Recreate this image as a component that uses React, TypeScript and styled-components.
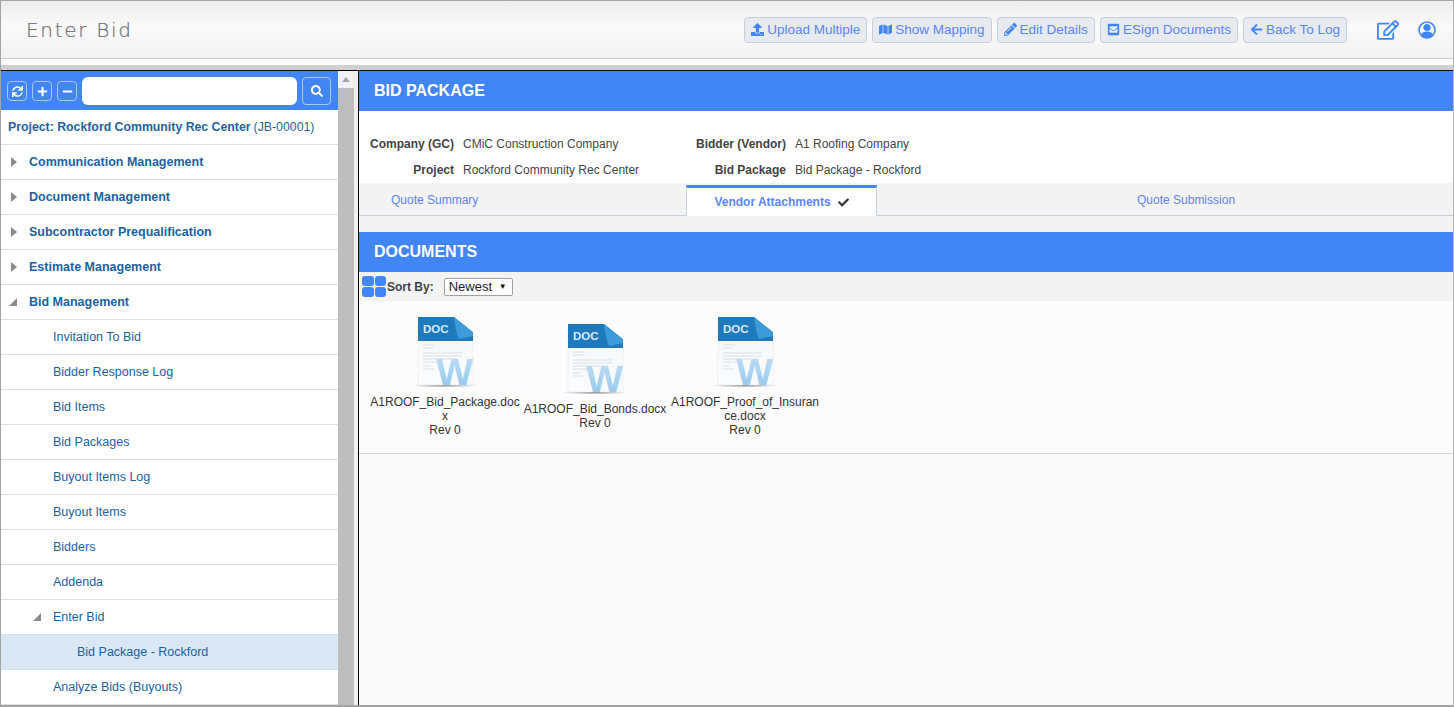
import React from "react";
import styled, { createGlobalStyle } from "styled-components";
import { FaUpload, FaMap, FaPencilAlt, FaEnvelopeSquare, FaArrowLeft, FaSync, FaPlus, FaMinus, FaSearch, FaCheck, FaRegEdit } from "react-icons/fa";

const Global = createGlobalStyle`
  html, body { margin: 0; padding: 0; height: 707px; overflow: hidden; background: #fff; }
  * { box-sizing: border-box; }
  body { font-family: "Liberation Sans", Arial, sans-serif; }
`;

const Page = styled.div`
  width: 1454px; height: 707px; display: flex; flex-direction: column; overflow: hidden;
  border: 1px solid #a3a3a3; border-bottom-width: 2px; border-right-color: #b5b5b5;
`;
const Header = styled.header`
  height: 58px; flex: none; display: flex; align-items: center; padding: 0 17px 0 25px;
  background: linear-gradient(#ececec 0%, #fafafa 45%, #f2f2f2 100%);
  border-bottom: 1px solid #cfcfcf;
`;
const Title = styled.h1`
  margin: 0; flex: 1; font: 200 20px/1 "DejaVu Sans", sans-serif; color: #6a6f78; letter-spacing: 1.7px;
  -webkit-text-stroke: 0.2px #6a6f78;
`;
const Actions = styled.div`display: flex; gap: 5px; margin-right: 30px;`;
const ActionButton = styled.button`
  height: 26px; padding: 0 6px; display: flex; align-items: center; gap: 3px; white-space: nowrap;
  background: #e7eaee; border: 1px solid #c6ced9; border-radius: 4px;
  font: 13.5px "Liberation Sans", sans-serif; color: #5b86f3;
  svg { color: #4285f4; font-size: 13px; }
`;
const HeaderIcons = styled.div`display: flex; align-items: center; gap: 19px; color: #3f86f2;`;
const Gap = styled.div`
  height: 12px; flex: none; background: linear-gradient(#fbfbfb 0 6px, #cfcfcf 6px 11px, #000 11px);
`;
const Body = styled.div`flex: 1; min-height: 0; display: flex;`;
const Side = styled.aside`width: 337px; flex: none; overflow: hidden; background: #fff;`;
const SideBar = styled.div`
  height: 39px; background: #4285f4; display: flex; align-items: center; padding: 0 7px 0 6px; gap: 5px;
`;
const SquareButton = styled.button`
  width: 20px; height: 20px; padding: 0; display: flex; align-items: center; justify-content: center;
  background: #4285f4; color: #fff; border: 1px solid #a9c6f8; border-radius: 4px; font-size: 11px; margin-top: 1px;
`;
const SearchInput = styled.input`
  flex: 1; min-width: 0; height: 28px; border: 0; border-radius: 6px; background: #fff; margin-left: 0;
`;
const SearchButton = styled.button`
  width: 29px; height: 28px; padding: 0; margin-left: 0; display: flex; align-items: center; justify-content: center;
  background: #4285f4; color: #fff; border: 1px solid #a9c6f8; border-radius: 4px; font-size: 12px;
`;
const ProjectRow = styled.div`
  height: 35px; display: flex; align-items: center; padding-left: 7px; white-space: nowrap;
  font-size: 12.3px; font-weight: 700; color: #23639f; border-bottom: 1px solid #d9dfe5;
  span { font-weight: 400; margin-left: 3px; }
`;
const Row = styled.div<{ $indent: number; $bold?: boolean; $active?: boolean }>`
  height: 35px; display: flex; align-items: center; padding-left: ${p => p.$indent}px; position: relative;
  font-size: 12.5px; font-weight: ${p => (p.$bold ? 700 : 400)}; color: #1a62a5;
  background: ${p => (p.$active ? "#dae7f5" : "#fff")}; border-bottom: 1px solid #d6e1ea;
  white-space: nowrap;
`;
const Arrow = styled.span<{ $left: number; $open?: boolean }>`
  position: absolute; left: ${p => p.$left}px; top: 50%; width: 0; height: 0; transform: translateY(-50%);
  ${p => p.$open
    ? `border-left: 8px solid transparent; border-bottom: 8px solid #8b8b8b;`
    : `border-left: 6px solid #8b8b8b; border-top: 5.5px solid transparent; border-bottom: 5.5px solid transparent;`}
`;
const Scroll = styled.div`
  width: 16px; flex: none; background: #bdbdbd; position: relative;
  display: flex; flex-direction: column;
`;
const ScrollTop = styled.div`
  height: 17px; background: #f1f1f1; display: flex; justify-content: center; padding-top: 6px;
  &::before { content: ""; width: 0; height: 0; border-left: 4px solid transparent; border-right: 4px solid transparent; border-bottom: 5px solid #a3a3a3; }
`;
const Divider = styled.div`
  width: 5px; flex: none; background: #f0f0f0; border-right: 1px solid #000;
`;
const Main = styled.main`flex: 1; min-width: 0; display: flex; flex-direction: column; background: #fafafa;`;
const Band = styled.div`
  height: 40px; flex: none; background: #4285f4; color: #fff; font-size: 16px; font-weight: 700;
  display: flex; align-items: center; padding-left: 15px;
`;
const Info = styled.div`
  height: 72px; flex: none; background: #fff; padding-top: 20px;
  display: grid; grid-template-columns: 95px 209px 123px 1fr; grid-auto-rows: 26px; align-items: center;
  font-size: 12px; color: #444;
`;
const Label = styled.div`font-weight: 700; text-align: right; color: #444; padding-right: 0; white-space: nowrap;`;
const Value = styled.div`padding-left: 9px; white-space: nowrap;`;
const Tabs = styled.div`
  height: 33px; flex: none; display: flex; background: #f3f3f3; border-bottom: 1px solid #c6d0de; font-size: 12px; color: #5b86f3;
`;
const Tab = styled.div<{ $pad: number; $w?: number }>`
  ${p => (p.$w ? `width: ${p.$w}px;` : "flex: 1;")} padding-left: ${p => p.$pad}px; display: flex; align-items: center; padding-top: 2px;
`;
const ActiveTab = styled.div`
  width: 191px; margin-top: 2px; margin-bottom: -1px; background: #fff; border: 1px solid #c6d0de; border-top: 3px solid #4285f4; border-bottom: 0;
  display: flex; align-items: center; justify-content: center; gap: 7px; font-weight: 700;
  svg { color: #333; font-size: 11px; }
`;
const Spacer = styled.div`height: 16px; flex: none; background: #f3f3f3;`;
const SortBar = styled.div`
  height: 29px; flex: none; background: #f3f3f3; display: flex; align-items: center; padding-left: 3px;
  font-size: 12px; font-weight: 700; color: #444;
`;
const GridIcon = styled.div`
  width: 24px; height: 21px; margin-right: 1px; display: grid; grid-template: 1fr 1fr / 1fr 1fr; gap: 1px;
  i { background: #4285f4; border-radius: 3px; }
`;
const SortSelect = styled.div`
  width: 69px; height: 18px; margin-left: 10px; background: #fff; border: 1px solid #a0a0a0; border-radius: 2px;
  display: flex; align-items: center; justify-content: space-between; padding: 0 5px 0 4px;
  font-size: 13px; font-weight: 400; color: #222;
  &::after { content: "▼"; font-size: 8px; color: #111; }
`;
const Files = styled.div`
  height: 153px; flex: none; padding: 0 0 0 11px; display: flex; align-items: center;
  border-bottom: 1px solid #d4d4d4; background: #fcfcfc;
`;
const FileCard = styled.div`
  width: 150px; display: flex; flex-direction: column; align-items: center; text-align: center;
  font-size: 12px; line-height: 14px; color: #333;
`;
const FileName = styled.div`width: 150px; word-break: break-all; margin-top: 6px;`;

function DocIcon({ id }: { id: string }) {
  return (
    <svg width="66" height="72" viewBox="0 0 66 72">
      <defs>
        <linearGradient id={`p${id}`} x1="0" y1="0" x2="0" y2="1"><stop offset="0" stopColor="#f4f6f8" /><stop offset="1" stopColor="#fbfcfd" /></linearGradient>
        <linearGradient id={`w${id}`} x1="0" y1="0" x2="0" y2="1"><stop offset="0" stopColor="#c2e0f5" /><stop offset="1" stopColor="#8fc4ea" /></linearGradient>
        <radialGradient id={`s${id}`}><stop offset="0" stopColor="#888" /><stop offset="1" stopColor="#888" stopOpacity="0" /></radialGradient>
      </defs>
      <ellipse cx="33" cy="68.5" rx="33" ry="2" fill={`url(#s${id})`} />
      <path d="M6 0H42L61 16V68H6Z" fill={`url(#p${id})`} stroke="#e4e6e8" strokeWidth=".5" />
      <path d="M6 0H42L61 16V24H6Z" fill="#1e79bd" />
      <path d="M42 0L61 15V19L47 22C44 16 43 8 42 0Z" fill="#3c9bd8" />
      <text x="11" y="16" fontFamily="Liberation Sans" fontWeight="700" fontSize="11.5" fill="#d6e9f7">DOC</text>
      <path d="M11 28H23M11 31H21M11 36H50M11 39H50M11 42H46M11 45H26M11 49H18M11 52H22" stroke="#dcdfe3" strokeWidth="1.2" />
      <text x="24" y="68" fontFamily="Liberation Sans" fontWeight="700" fontSize="36" fill={`url(#w${id})`} textLength="37" lengthAdjust="spacingAndGlyphs">W</text>
    </svg>
  );
}

function UserIcon() {
  return (
    <svg width="18" height="20" viewBox="0 0 18 20">
      <circle cx="9" cy="10" r="8" fill="none" stroke="currentColor" strokeWidth="1.6" />
      <circle cx="9" cy="7.5" r="3.6" fill="currentColor" />
      <path d="M3 15.2C4 12.2 6 11.5 9 11.5S14 12.2 15 15.2C13.5 17 11.5 18 9 18S4.500 17 3 15.2Z" fill="currentColor" />
    </svg>
  );
}

const actions: [string, React.ReactNode][] = [
  ["Upload Multiple", <FaUpload key="a" />],
  ["Show Mapping", <FaMap key="b" />],
  ["Edit Details", <FaPencilAlt key="c" />],
  ["ESign Documents", <FaEnvelopeSquare key="d" />],
  ["Back To Log", <FaArrowLeft key="e" />],
];

type Item = { label: string; indent: number; bold?: boolean; active?: boolean; arrow?: number; open?: boolean };
const items: Item[] = [
  { label: "Communication Management", indent: 28, bold: true, arrow: 10 },
  { label: "Document Management", indent: 28, bold: true, arrow: 10 },
  { label: "Subcontractor Prequalification", indent: 28, bold: true, arrow: 10 },
  { label: "Estimate Management", indent: 28, bold: true, arrow: 10 },
  { label: "Bid Management", indent: 28, bold: true, arrow: 8, open: true },
  { label: "Invitation To Bid", indent: 52 },
  { label: "Bidder Response Log", indent: 52 },
  { label: "Bid Items", indent: 52 },
  { label: "Bid Packages", indent: 52 },
  { label: "Buyout Items Log", indent: 52 },
  { label: "Buyout Items", indent: 52 },
  { label: "Bidders", indent: 52 },
  { label: "Addenda", indent: 52 },
  { label: "Enter Bid", indent: 52, arrow: 32, open: true },
  { label: "Bid Package - Rockford", indent: 76, active: true },
  { label: "Analyze Bids (Buyouts)", indent: 52 },
];

const files = [
  { name: "A1ROOF_Bid_Package.docx" },
  { name: "A1ROOF_Bid_Bonds.docx" },
  { name: "A1ROOF_Proof_of_Insurance.docx" },
];

export default function App() {
  return (
    <Page>
      <Global />
      <Header>
        <Title>Enter Bid</Title>
        <Actions>
          {actions.map(([label, icon]) => (
            <ActionButton key={label}>{icon}{label}</ActionButton>
          ))}
        </Actions>
        <HeaderIcons>
          <FaRegEdit size={22} />
          <UserIcon />
        </HeaderIcons>
      </Header>
      <Gap />
      <Body>
        <Side>
          <SideBar>
            <SquareButton><FaSync /></SquareButton>
            <SquareButton><FaPlus /></SquareButton>
            <SquareButton><FaMinus /></SquareButton>
            <SearchInput />
            <SearchButton><FaSearch /></SearchButton>
          </SideBar>
          <ProjectRow>Project: Rockford Community Rec Center <span>(JB-00001)</span></ProjectRow>
          {items.map(it => (
            <Row key={it.label} $indent={it.indent} $bold={it.bold} $active={it.active}>
              {it.arrow !== undefined && <Arrow $left={it.arrow} $open={it.open} />}
              {it.label}
            </Row>
          ))}
        </Side>
        <Scroll><ScrollTop /></Scroll>
        <Divider />
        <Main>
          <Band>BID PACKAGE</Band>
          <Info>
            <Label>Company (GC)</Label><Value>CMiC Construction Company</Value>
            <Label>Bidder (Vendor)</Label><Value>A1 Roofing Company</Value>
            <Label>Project</Label><Value>Rockford Community Rec Center</Value>
            <Label>Bid Package</Label><Value>Bid Package - Rockford</Value>
          </Info>
          <Tabs>
            <Tab $pad={32} $w={327}>Quote Summary</Tab>
            <ActiveTab>Vendor Attachments <FaCheck /></ActiveTab>
            <Tab $pad={260}>Quote Submission</Tab>
          </Tabs>
          <Spacer />
          <Band>DOCUMENTS</Band>
          <SortBar>
            <GridIcon><i /><i /><i /><i /></GridIcon>
            Sort By:
            <SortSelect>Newest</SortSelect>
          </SortBar>
          <Files>
            {files.map((f, i) => (
              <FileCard key={f.name}>
                <DocIcon id={String(i)} />
                <FileName>{f.name}<br />Rev 0</FileName>
              </FileCard>
            ))}
          </Files>
        </Main>
      </Body>
    </Page>
  );
}
